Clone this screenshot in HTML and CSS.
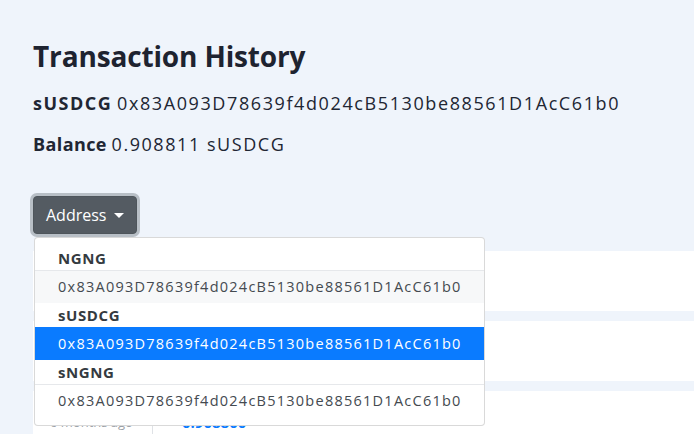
FILE: index.html
```html
<!DOCTYPE html>
<html lang="en">
<head>
<meta charset="utf-8">
<title>Transaction History</title>
<link rel="stylesheet" href="styles.css">
</head>
<body>
<main class="page">
  <h2 class="title">Transaction History</h2>
  <p class="info"><b class="key">sUSDCG</b> <span class="addr">0x83A093D78639f4d024cB5130be88561D1AcC61b0</span></p>
  <p class="info"><b class="key tight">Balance</b> <span class="val">0.908811 sUSDCG</span></p>

  <div class="dropdown">
    <button class="btn" type="button">Address <span class="caret"></span></button>
    <div class="menu">
      <div class="menu-header">NGNG</div>
      <div class="menu-item hover">0x83A093D78639f4d024cB5130be88561D1AcC61b0</div>
      <div class="menu-header">sUSDCG</div>
      <div class="menu-item active">0x83A093D78639f4d024cB5130be88561D1AcC61b0</div>
      <div class="menu-header">sNGNG</div>
      <div class="menu-item">0x83A093D78639f4d024cB5130be88561D1AcC61b0</div>
    </div>
  </div>

  <div class="rows">
    <div class="row">
      <div class="cell first">6 months ago</div>
      <div class="cell amount">0.908800</div>
    </div>
    <div class="row">
      <div class="cell first">6 months ago</div>
      <div class="cell amount">0.908800</div>
    </div>
    <div class="row">
      <div class="cell first">6 months ago</div>
      <div class="cell amount">0.908800</div>
    </div>
  </div>
</main>
</body>
</html>
```
FILE: styles.css
```css
html, body {
  margin: 0;
  padding: 0;
  background: #eff4fb;
  overflow: hidden;
}
body {
  font-family: "Open Sans", "Noto Sans", sans-serif;
  color: #212633;
}
.page {
  padding: 39px 0 0 33px;
}
.title {
  margin: 0 0 17px;
  font-size: 28px;
  line-height: 34px;
  font-weight: 700;
  letter-spacing: -0.15px;
  color: #1e2330;
}
.info {
  margin: 0 0 14px;
  font-size: 18px;
  line-height: 27px;
}
.key {
  font-weight: 700;
  letter-spacing: 1.5px;
}
.key.tight { letter-spacing: 0.4px; }
.addr { letter-spacing: 1.6px; }
.val { letter-spacing: 1.55px; }

.dropdown {
  position: relative;
  width: max-content;
  margin-top: 38px;
}
.btn {
  display: flex;
  align-items: center;
  gap: 8px;
  height: 38px;
  padding: 0 12px;
  font-family: inherit;
  font-size: 16px;
  color: #fff;
  background: #545b62;
  border: 1px solid #4e555b;
  border-radius: 4px;
  box-shadow: 0 0 0 3px rgba(130, 138, 145, 0.5);
}
.caret {
  width: 0;
  height: 0;
  border-left: 5px solid transparent;
  border-right: 5px solid transparent;
  border-top: 5px solid #fff;
}
.menu {
  position: absolute;
  z-index: 10;
  top: calc(100% + 3px);
  left: 1px;
  padding: 8px 0;
  background: #fff;
  border: 1px solid rgba(0, 0, 0, 0.15);
  border-radius: 4px;
  white-space: nowrap;
}
.menu-header {
  padding: 0 22px 0 23px;
  height: 24px;
  line-height: 24px;
  font-size: 15px;
  font-weight: 700;
  letter-spacing: 0.6px;
  color: #343a40;
}
.menu-item {
  padding: 0 22px 0 23px;
  height: 32px;
  line-height: 32px;
  font-size: 14.5px;
  letter-spacing: 1.25px;
  color: #444a50;
  border-top: 1px solid #e6e8eb;
}
.menu-item.hover { background: #f7f8f9; }
.menu-item.active { background: #0a7bff; color: #fff; border-top-color: #0a7bff; }

.rows {
  display: flex;
  flex-direction: column;
  gap: 10px;
  margin-top: 17px;
}
.row {
  display: flex;
  align-items: stretch;
  height: 60px;
  background: #fff;
}
.cell {
  display: flex;
  align-items: center;
  padding-top: 2px;
  white-space: nowrap;
}
.cell.first {
  width: 102px;
  padding-left: 17px;
  font-size: 13px;
  color: #9aa0a6;
  border-right: 1px solid #dfe2e6;
}
.cell.amount {
  padding-left: 29px;
  font-size: 15px;
  font-weight: 700;
  color: #0a7bff;
}
```
